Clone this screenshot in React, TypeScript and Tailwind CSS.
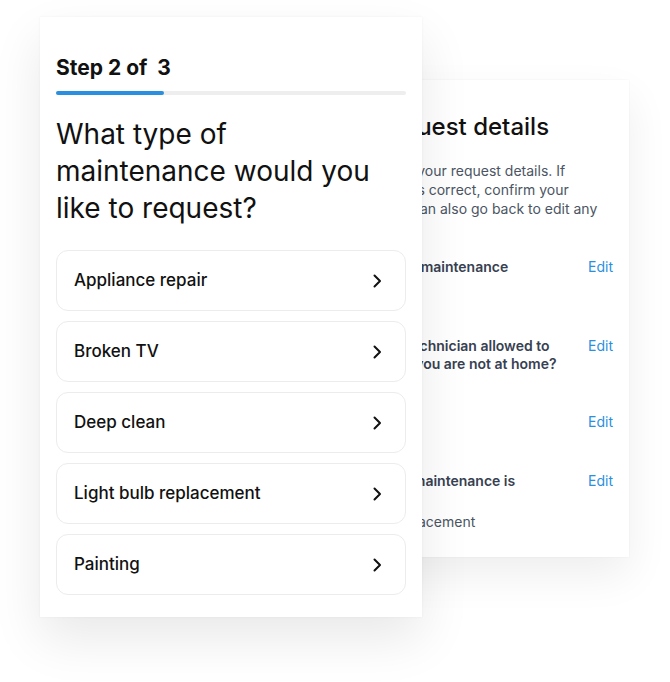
import React from 'react';

const options = ['Appliance repair', 'Broken TV', 'Deep clean', 'Light bulb replacement', 'Painting'];

const Chevron = () => (
    <svg width="20" height="20" viewBox="0 0 20 20" fill="none" stroke="#111111" strokeWidth={2} strokeLinecap="round" strokeLinejoin="round">
        <path d="M7.5 4.5 L13 10 L7.5 15.5" />
    </svg>
);

const DetailRow = ({ label, value, className }: { label: React.ReactNode; value: string; className: string }) => (
    <div className={`flex justify-between items-start ${className}`}>
        <div>
            <div className="text-[14px] leading-[18px] font-semibold text-[#374151] whitespace-nowrap">{label}</div>
            <div className="mt-1 text-[14px] leading-[19px] text-[#4b5563]">{value}</div>
        </div>
        <span className="text-[14px] leading-[18px] text-[#2b8fe0]">Edit</span>
    </div>
);

const DetailsCard: React.FC = () => (
    <div className="absolute left-[350px] top-[80px] w-[279px] h-[477px] bg-white shadow-[0_0_2px_rgba(0,0,0,0.05),0_18px_40px_rgba(0,0,0,0.07)] px-4 pt-[31px]">
        <h2 className="pl-[7px] text-[24px] leading-[32px] font-medium text-[#111111]">Request details</h2>
        <p className="mt-[18px] text-[14px] leading-[19px] text-[#4b5563] whitespace-nowrap">
            Review your request details. If<br />
            all of it is correct, confirm your<br />
            or you can also go back to edit any<br />
            details.
        </p>
        <div className="mt-[21px] flex flex-col">
            <DetailRow className="" label="Type of maintenance" value="Repair" />
            <DetailRow className="mt-[38px]" label={<>Is the technician allowed to<br />go in if you are not at home?</>} value="Yes" />
            <DetailRow className="mt-[17px]" label="Date" value="12 May" />
            <DetailRow className="mt-[18px]" label={<>Which maintenance is<br />needed</>} value="Full replacement" />
        </div>
    </div>
);

const StepCard: React.FC = () => (
    <div className="absolute left-[40px] top-[17px] w-[382px] bg-white shadow-[0_0_2px_rgba(0,0,0,0.06),0_22px_48px_rgba(0,0,0,0.09)] px-4 pt-[37px] pb-[22px]">
        <div className="text-[21px] leading-[28px] font-bold text-[#111111] whitespace-pre">Step 2 of  3</div>
        <div className="mt-[9px] h-1 w-full rounded-full bg-[#eeeeef]">
            <div className="h-1 w-[108px] rounded-full bg-[#2b8fe0]" />
        </div>
        <h1 className="mt-[21px] w-[330px] text-[28px] leading-[37px] font-normal text-[#111111]">
            What type of maintenance would you like to request?
        </h1>
        <div className="mt-[23px] flex flex-col gap-[10px]">
            {options.map(o => (
                <div key={o} className="h-[61px] rounded-xl border border-[#ececec] flex items-center justify-between pl-[17px] pr-[18px]">
                    <span className="text-[17px] font-medium text-[#111111]">{o}</span>
                    <Chevron />
                </div>
            ))}
        </div>
    </div>
);

export default function App() {
    return (
        <div className="relative w-[670px] h-[682px] bg-white overflow-hidden" style={{ fontFamily: 'Inter, "Noto Sans", sans-serif' }}>
            <DetailsCard />
            <StepCard />
        </div>
    );
}
